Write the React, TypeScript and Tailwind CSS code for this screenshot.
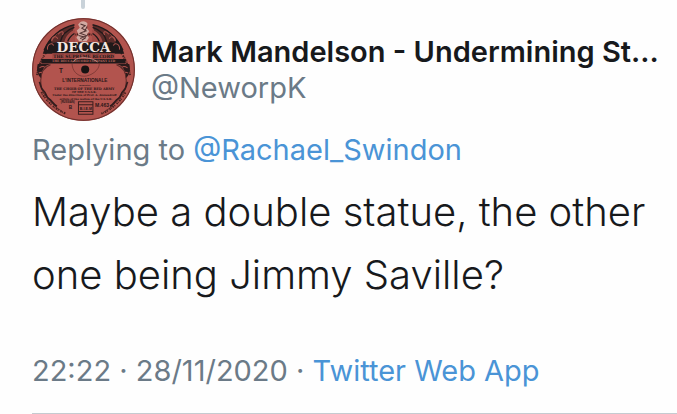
import type { ReactNode } from 'react';

function RecordAvatar() {
  return (
    <svg viewBox="0 0 306 306" className="size-[103px] shrink-0" role="img" aria-label="Decca record label">
      <circle cx="153" cy="153" r="153" fill="#b2544e" />
      <circle cx="153" cy="153" r="151" fill="none" stroke="#6b302d" strokeWidth="3" />

      {/* small print round the rim */}
      <g fill="none" stroke="#46211f" strokeWidth="6">
        <path d="M15 170a139 139 0 0 1 276 0" strokeDasharray="5 2 3 2 6 3 2 2 4 5" />
        <path d="M28 220a142 142 0 0 0 72 64M206 284a142 142 0 0 0 72-64" strokeDasharray="4 2 2 3 5 2 3 6" />
      </g>

      {/* dark ornamental shoulders */}
      <path d="M32 106a130 130 0 0 1 30-52l-4 18h190l-4-18a130 130 0 0 1 30 52z" fill="#21191a" />
      <path d="M58 72c8-22 34-44 68-52l-4 18c-12 8-20 20-22 34zM248 72c-8-22-34-44-68-52l4 18c12 8 20 20 22 34z" fill="#5a2b29" />
      <path d="M96 72c4-18 14-30 32-38v38zM210 72c-4-18-14-30-32-38v38z" fill="#a34a45" />
      <g fill="none" stroke="#21191a" strokeWidth="4">
        <path d="M84 72c4-20 18-36 42-44M106 70c4-12 10-18 20-24M222 72c-4-20-18-36-42-44M200 70c-4-12-10-18-20-24" />
        <path d="M36 96a124 124 0 0 1 90-76M270 96a124 124 0 0 0-90-76" />
      </g>
      <g fill="none" stroke="#b2544e" strokeWidth="3">
        <path d="M46 94c-2-16 14-24 18-12M58 68c2-14 16-16 18-6M78 48c8-12 20-8 12 2M260 94c2-16-14-24-18-12M248 68c-2-14-16-16-18-6M228 48c-8-12-20-8-12 2" />
      </g>

      {/* title bands */}
      <path d="M60 105h186v17H60z" fill="#a34a45" />
      <path d="M28 122h250v13H28z" fill="#21191a" />
      <path d="M17 137h38c-18 4-26 16-28 42-12-10-14-26-10-42zM289 137h-38c18 4 26 16 28 42 12-10 14-26 10-42z" fill="#2b1a1b" />
      <path d="M22 148c10-6 18-4 20 2M284 148c-10-6-18-4-20 2M20 164c6-4 10-4 12 0M286 164c-6-4-10-4-12 0" fill="none" stroke="#b2544e" strokeWidth="3" />
      <path d="M55 139c-40 14-34 76-10 96 16 14 20 30 46 44M251 139c40 14 34 76 10 96-16 14-20 30-46 44" fill="none" stroke="#5a2b29" strokeWidth="3" />
      <path d="M22 190c6 12 2 18 12 26s6 18 16 24 10 14 24 22M284 190c-6 12-2 18-12 26s-6 18-16 24-10 14-24 22" fill="none" stroke="#321c1d" strokeWidth="5" />

      {/* bust above the name */}
      <path d="M142 13c8-6 20-4 23 4l-3 12 8 10-7 10 6 10-7 10h-22l-8-10 6-10-5-12 9-8-5-10z" fill="#d2aaa2" />
      <path d="M144 18l14 5-10 7 13 8-18 7 20 8-20 8M164 25l-9 17M138 52l15 4M148 66l12-8" fill="none" stroke="#513231" strokeWidth="3" />

      <g fontFamily="'DejaVu Serif', serif" fontWeight="700" textAnchor="middle">
        <text x="153" y="101" fontSize="40" fill="#f5e8e1">DECCA</text>
        <text x="153" y="119" fontSize="13" fill="#21191a">THE SUPREME RECORD</text>
        <text x="153" y="132" fontSize="9" fill="#b5655e">THE DECCA RECORD COMPANY LTD</text>
      </g>

      {/* spindle hole */}
      <path d="M119 135c0 20 14 38 35 38s47-18 46-38" fill="none" stroke="#6b302d" strokeWidth="2" />
      <path d="M121 131c6-8 14-12 26-13s34 1 48 13" fill="none" stroke="#d7a69c" strokeWidth="2" />
      <circle cx="158" cy="153" r="12" fill="#171313" />

      <g fontFamily="'Liberation Sans', sans-serif" fontWeight="700" textAnchor="middle" fill="#2b1718">
        <text x="86" y="162" fontSize="19">T</text>
        <text x="157" y="190" fontSize="14">L'INTERNATIONALE</text>
        <text x="157" y="201" fontSize="7">(Degeyter)</text>
      </g>
      <g fontFamily="'DejaVu Serif', serif" fontWeight="700" textAnchor="middle" fill="#2b1718">
        <text x="155" y="213" fontSize="10">THE CHOIR OF THE RED ARMY</text>
        <text x="155" y="223" fontSize="8">OF THE U.S.S.R.</text>
        <text x="156" y="233" fontSize="8">Under the direction of Prof. A. Alexandroff</text>
        <text x="160" y="243" fontSize="8">artists of the nation of the U.S.S.R.</text>
      </g>
      <g fontFamily="'Liberation Sans', sans-serif" fontWeight="700" textAnchor="middle" fill="#2b1718">
        <text x="106" y="254" fontSize="8">(RUSSIAN)</text>
        <text x="114" y="271" fontSize="14">B</text>
        <text x="208" y="263" fontSize="15">M.463</text>
        <text x="160" y="273" fontSize="11">B.I.E.M</text>
      </g>
      <path d="M138 249h43v37h-43zM138 258h43M138 278h43" fill="none" stroke="#3b1e1e" strokeWidth="3" />
    </svg>
  );
}

function TweetLink({ href, children }: { href: string; children: ReactNode }) {
  return (
    <a href={href} className="text-[#4a94d6]">
      {children}
    </a>
  );
}

export default function App() {
  return (
    <main className="min-h-screen bg-[#fefefe] pl-8 font-['Inter',sans-serif] text-[#17191c]">
      <article className="border-b border-[#c5cbd0] pb-6">
        <div className="flex w-[102px] justify-center">
          <div className="h-[9px] w-1 rounded-b-sm bg-[#c9d2d9]" />
        </div>

        <header className="mt-[9px] flex gap-4">
          <RecordAvatar />
          <div className="min-w-0 pt-4 whitespace-nowrap">
            <h1 className="text-[29px] leading-9 font-semibold">Mark Mandelson - Undermining St...</h1>
            <p className="text-[29px] leading-9 text-[#6b7a87]">@NeworpK</p>
          </div>
        </header>

        <p className="mt-[11px] text-[29px] leading-9 text-[#6b7a87]">
          Replying to <TweetLink href="#rachael">@Rachael_Swindon</TweetLink>
        </p>

        <p className="mt-3 pr-4 text-[40px] leading-[63px] font-light">
          Maybe a double statue, the other one being Jimmy Saville?
        </p>

        <p className="mt-[47px] text-[29px] leading-9 text-[#6b7a87]">
          <time dateTime="2020-11-28T22:22">22:22 · 28/11/2020</time> ·{' '}
          <TweetLink href="#source">Twitter Web App</TweetLink>
        </p>
      </article>
    </main>
  );
}
